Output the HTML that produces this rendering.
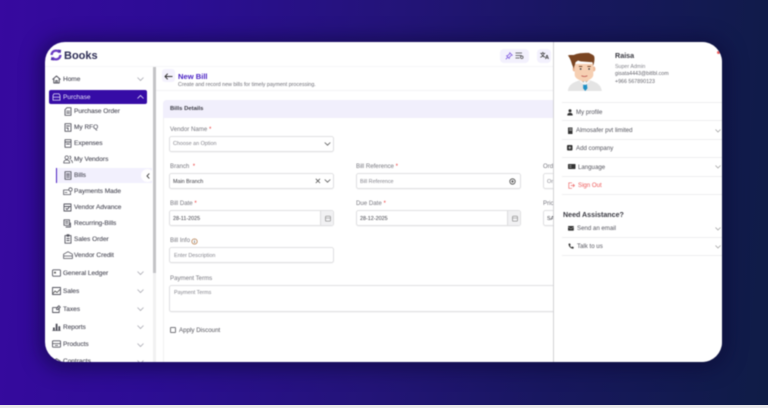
<!DOCTYPE html>
<html lang="en">
<head>
<meta charset="utf-8">
<title>New Bill</title>
<style>
*{box-sizing:border-box;margin:0;padding:0}
html,body{width:768px;height:408px;overflow:hidden;background:#e8e8ea}
body{font-family:"Liberation Sans",sans-serif;position:relative}
#bg{position:absolute;left:0;top:0;width:768px;height:405px;background:linear-gradient(95deg,#37099f 0%,#2c0d94 22%,#231478 50%,#18175f 72%,#0f1c46 100%)}
#card{position:absolute;left:45px;top:42px;width:677px;height:320px;background:#fff;border-radius:20px;overflow:hidden;box-shadow:0 2px 18px 6px rgba(10,8,50,.5);filter:blur(.42px)}
.a{position:absolute;white-space:nowrap}
svg{position:absolute;overflow:visible}
.s{fill:none;stroke:#55555f;stroke-width:1;stroke-linecap:round;stroke-linejoin:round}
.nav{font-size:6.5px;color:#4b4b57;-webkit-text-stroke:.1px #4b4b57}
.chev{fill:none;stroke:#a9a9b2;stroke-width:.8}
.lab{font-size:6.1px;color:#77777f}
.r{color:#ec3b3b}
.inp{position:absolute;border:1px solid #e0e0e2;border-radius:2.5px;background:#fff;box-shadow:0 .5px 1px rgba(0,0,0,.06);height:16px}
.ph{font-size:5.4px;color:#85858d}
.v{font-size:5.4px;color:#3a3a42}
.addon{position:absolute;right:0;top:0;height:100%;width:13px;background:#f1f1f3;border-left:1px solid #dcdcdf;border-radius:0 2.5px 2.5px 0}
.ln{position:absolute;left:517px;width:160px;height:1px;background:#eeeeef}
.pi{font-size:6.1px;color:#55555e}
</style>
</head>
<body>
<div id="bg"></div>
<div id="card">
  <!-- logo -->
  <svg style="left:5px;top:7px" width="12" height="12" viewBox="0 0 12 12"><circle cx="6" cy="6" r="4.400" fill="none" stroke="#6a3bc4" stroke-width="2.300" stroke-dasharray="11 2.800"/><path d="M7.800.5 11.200 1 10.400 4.500zM4.200 11.500.8 11 1.600 7.500z" fill="#4d2aa8"/></svg>
  <div class="a" style="left:19px;top:8px;font-size:11px;font-weight:700;color:#2d2d55">Books</div>
  <div class="a" style="left:0;top:24px;width:677px;height:1px;background:#f6f6f8"></div>

  <!-- sidebar -->
  <svg style="left:7px;top:33px" width="9" height="9" viewBox="0 0 9 9"><path class="s" d="M.8 4.300 4.500 1l3.700 3.300M1.800 3.600V8h5.400V3.600M3.700 8V5.600h1.600V8"/></svg>
  <div class="a nav" style="left:18px;top:34px">Home</div>
  <svg style="left:92px;top:35px" width="7" height="4"><path class="chev" d="M.5.500 3.500 3.500 6.500.500"/></svg>

  <div class="a" style="left:4px;top:48px;width:98px;height:14px;background:#360ca6;border-radius:2px"></div>
  <svg style="left:7px;top:51px" width="9" height="8" viewBox="0 0 9 8"><path d="M1 2.500 2 .8h5l1 1.700v4.700H1zM1 4.200h7" fill="none" stroke="#cfc6f2" stroke-width=".9"/></svg>
  <div class="a nav" style="left:18px;top:52px;color:#e6e1fa;-webkit-text-stroke:0">Purchase</div>
  <svg style="left:92px;top:53px" width="7" height="4"><path d="M.5 3.500 3.500.500 6.500 3.500" fill="none" stroke="#e6e1fa" stroke-width=".8"/></svg>

  <svg style="left:19px;top:65px" width="8" height="9" viewBox="0 0 8 9"><path class="s" style="stroke-width:.9" d="M3 .7h4v7.600H1V2.700zM2.600 4.200h3M2.600 6h3"/></svg>
  <div class="a nav" style="left:29px;top:66px">Purchase Order</div>
  <svg style="left:19px;top:81px" width="8" height="9" viewBox="0 0 8 9"><path class="s" style="stroke-width:.9" d="M1 .7h6v7.600H1zM2.500 3h3M2.500 5h1.600v2"/></svg>
  <div class="a nav" style="left:29px;top:82px">My RFQ</div>
  <svg style="left:19px;top:97px" width="8" height="9" viewBox="0 0 8 9"><path class="s" style="stroke-width:.9" fill="#ddd" d="M1 .7h6v7.600H1zM1 3h6M2.500 5h3"/></svg>
  <div class="a nav" style="left:29px;top:98px">Expenses</div>
  <svg style="left:18px;top:113px" width="10" height="9" viewBox="0 0 10 9"><circle class="s" style="stroke-width:.8" cx="3.700" cy="2.600" r="1.700"/><path class="s" style="stroke-width:.8" d="M.7 8c0-2 1.300-3 3-3s3 1 3 3zM6.800 1.200c1.200.2 1.500 2.400 0 2.900M8 5.200c1 .4 1.400 1.400 1.400 2.600"/></svg>
  <div class="a nav" style="left:29px;top:114px">My Vendors</div>

  <div class="a" style="left:11px;top:126px;width:96px;height:15px;background:#f2f0fd"></div>
  <div class="a" style="left:11px;top:126px;width:1px;height:15px;background:#4a1fc0"></div>
  <div class="a" style="left:96px;top:127px;width:13px;height:13px;border-radius:50%;background:#fff"></div>
  <svg style="left:101px;top:131px" width="4" height="6"><path d="M3.300.5 1 3l2.300 2.500" fill="none" stroke="#333" stroke-width=".9"/></svg>
  <svg style="left:19px;top:129px" width="8" height="9" viewBox="0 0 8 9"><path class="s" style="stroke-width:.9" d="M1 .7h6v7.600H1zM2.500 3h3M2.500 4.600h3M2.500 6.200h3"/></svg>
  <div class="a nav" style="left:29px;top:130px">Bills</div>

  <svg style="left:18px;top:145px" width="10" height="9" viewBox="0 0 10 9"><path class="s" style="stroke-width:.8" d="M.6 3h5M.6 3v4.600h7V5M2 5.500h2"/><circle class="s" style="stroke-width:.8" cx="7.500" cy="2.500" r="1.700"/></svg>
  <div class="a nav" style="left:29px;top:146px">Payments Made</div>
  <svg style="left:18px;top:161px" width="9" height="9" viewBox="0 0 9 9"><path class="s" style="stroke-width:.9" d="M1 1h7v7H1zM1 3.500h7M3 5.500l1 1 2-2"/></svg>
  <div class="a nav" style="left:29px;top:162px">Vendor Advance</div>
  <svg style="left:18px;top:177px" width="9" height="9" viewBox="0 0 9 9"><path class="s" style="stroke-width:.9" d="M1 .8h5.500v5.500H1zM2.500 2.600h2.500M2.500 4.200h2.500M7.500 4v4H3"/></svg>
  <div class="a nav" style="left:29px;top:178px">Recurring-Bills</div>
  <svg style="left:19px;top:192px" width="8" height="10" viewBox="0 0 8 10"><path class="s" style="stroke-width:.9" d="M1 1.600h6v7.600H1zM3 .7h2v1.600H3zM2.800 4.500h2.400M2.800 6.500h2.400"/></svg>
  <div class="a nav" style="left:29px;top:194px">Sales Order</div>
  <svg style="left:18px;top:209px" width="10" height="8" viewBox="0 0 10 8"><path class="s" style="stroke-width:.8" d="M.6 3.200 5 .7l4.400 2.500v4.300H.6zM.6 5h8.800"/></svg>
  <div class="a nav" style="left:29px;top:210px">Vendor Credit</div>

  <svg style="left:7px;top:227px" width="9" height="8" viewBox="0 0 9 8"><rect class="s" x=".5" y=".8" width="8" height="6.400" rx="1" fill="#ccc" style="stroke-width:.9"/><circle cx="3" cy="3.600" r="1" fill="#555"/></svg>
  <div class="a nav" style="left:18px;top:227.500px">General Ledger</div>
  <svg style="left:92px;top:229px" width="7" height="4"><path class="chev" d="M.5.500 3.500 3.500 6.500.500"/></svg>

  <svg style="left:7px;top:245px" width="9" height="8" viewBox="0 0 9 8"><rect class="s" x=".5" y=".5" width="8" height="7" fill="#bbb" style="stroke-width:.9"/><path d="M1 6.500 3 4l2 1.500L8 2.500" fill="none" stroke="#444" stroke-width=".8"/></svg>
  <div class="a nav" style="left:18px;top:245.500px">Sales</div>
  <svg style="left:92px;top:247px" width="7" height="4"><path class="chev" d="M.5.500 3.500 3.500 6.500.500"/></svg>

  <svg style="left:7px;top:263px" width="9" height="8" viewBox="0 0 9 8"><path class="s" style="stroke-width:.9" d="M.6 2.600h5.600M.6 2.600v4.900h6.600V4M6.800.7l1.500 1.500L6 4.500H4.600V3z"/></svg>
  <div class="a nav" style="left:18px;top:263.500px">Taxes</div>
  <svg style="left:92px;top:265px" width="7" height="4"><path class="chev" d="M.5.500 3.500 3.500 6.500.500"/></svg>

  <svg style="left:7px;top:281px" width="9" height="8" viewBox="0 0 9 8"><path d="M1 7.500V4.500h1.800v3zM3.700 7.500V.8h1.800v6.700zM6.400 7.500V3.300h1.800v4.200z" fill="#4a4a55"/><path d="M.3 7.600h8.400" stroke="#4a4a55" stroke-width=".6"/></svg>
  <div class="a nav" style="left:18px;top:281.500px">Reports</div>
  <svg style="left:92px;top:283px" width="7" height="4"><path class="chev" d="M.5.500 3.500 3.500 6.500.500"/></svg>

  <svg style="left:7px;top:298px" width="9" height="8" viewBox="0 0 9 8"><rect class="s" x=".5" y=".8" width="8" height="6.400" rx=".7" style="stroke-width:.9"/><path d="M.5 3.600h8M3 5.400h3" stroke="#4a4a55" stroke-width=".8"/></svg>
  <div class="a nav" style="left:18px;top:299px">Products</div>
  <svg style="left:92px;top:301px" width="7" height="4"><path class="chev" d="M.5.500 3.500 3.500 6.500.500"/></svg>

  <svg style="left:7px;top:316px" width="9" height="8" viewBox="0 0 9 8"><path class="s" style="stroke-width:.9" d="M.8 3 4.500.8 8.200 3v3.500H.8z"/></svg>
  <div class="a nav" style="left:18px;top:316px">Contracts</div>
  <svg style="left:92px;top:318px" width="7" height="4"><path class="chev" d="M.5.500 3.500 3.500 6.500.500"/></svg>

  <!-- sidebar scrollbar -->
  <div class="a" style="left:108px;top:25px;width:3px;height:295px;background:#f1f1f2"></div>
  <div class="a" style="left:108px;top:25px;width:3px;height:206px;background:#c3c3c6"></div>

  <!-- header -->
  <div class="a" style="left:117px;top:27px;width:13px;height:13px;border-radius:3px;background:#f4f2fd"></div>
  <svg style="left:119px;top:31px" width="9" height="7" viewBox="0 0 9 7"><path d="M8.500 3.500H1M3.700.7 1 3.500l2.700 2.800" fill="none" stroke="#333" stroke-width="1"/></svg>
  <div class="a" style="left:133px;top:30px;font-size:7.600px;font-weight:700;color:#4a22c4">New Bill</div>
  <div class="a" style="left:133px;top:40px;font-size:5.300px;color:#6e6e76">Create and record new bills for timely payment processing.</div>
  <div class="a" style="left:111px;top:48px;width:398px;height:1px;background:#f3f3f5"></div>

  <div class="a" style="left:455px;top:7px;width:29px;height:14px;border-radius:4px;background:#f3f1fd"></div>
  <svg style="left:460px;top:10px" width="8" height="8" viewBox="0 0 8 8"><path d="M4.800.8 7.200 3.200 5.800 3.600 4.400 5.400 4.200 6.400 1.600 3.800 2.600 3.600 4.400 2.200zM2.800 5.200.8 7.200" fill="none" stroke="#7f5be0" stroke-width=".8"/></svg>
  <svg style="left:470px;top:10px" width="9" height="8" viewBox="0 0 9 8"><path d="M.5 1h6.500M.5 3.500h6M.5 6h4" stroke="#444" stroke-width=".8"/><circle cx="6.800" cy="5.300" r="1.300" fill="none" stroke="#444" stroke-width=".7"/></svg>
  <div class="a" style="left:492px;top:7px;width:14px;height:14px;border-radius:4px;background:#f3f1fd"></div>
  <div class="a" style="left:495px;top:9px;font-size:5.500px;font-weight:700;color:#333;font-family:'Liberation Sans','Noto Sans CJK SC',sans-serif">文</div>
  <div class="a" style="left:500px;top:12.500px;font-size:5.500px;font-weight:700;color:#333">A</div>

  <!-- form -->
  <div class="a" style="left:118px;top:58px;width:392px;height:262px;border-left:1px solid #f1f1f2;border-top:1px solid #eeeeef;border-radius:4px 0 0 0"></div>
  <div class="a" style="left:118px;top:58px;width:392px;height:18px;background:#f1effc;border-radius:4px 0 0 0"></div>
  <div class="a" style="left:125px;top:64px;font-size:5.900px;font-weight:700;color:#3c3c46">Bills Details</div>

  <div class="a lab" style="left:125px;top:83.500px">Vendor Name <span class="r">*</span></div>
  <div class="inp" style="left:124px;top:94px;width:165px;height:15.500px"></div>
  <div class="a ph" style="left:128px;top:99px">Choose an Option</div>
  <svg style="left:279px;top:100px" width="7" height="4"><path d="M.7.500 3.500 3.200 6.300.500" fill="none" stroke="#555" stroke-width=".8"/></svg>

  <div class="a lab" style="left:125px;top:120.500px">Branch &nbsp;<span class="r">*</span></div>
  <div class="inp" style="left:124px;top:131px;width:165px"></div>
  <div class="a v" style="left:128px;top:136.500px">Main Branch</div>
  <svg style="left:270px;top:136px" width="6" height="6"><path d="M.8.800 5 5M5 .8.800 5" stroke="#555" stroke-width=".8"/></svg>
  <svg style="left:279px;top:137px" width="7" height="4"><path d="M.7.500 3.500 3.200 6.300.500" fill="none" stroke="#555" stroke-width=".8"/></svg>

  <div class="a lab" style="left:311px;top:120.500px">Bill Reference <span class="r">*</span></div>
  <div class="inp" style="left:311px;top:131px;width:165px"></div>
  <div class="a ph" style="left:315px;top:136.500px">Bill Reference</div>
  <svg style="left:464px;top:136px" width="7" height="7"><circle cx="3.500" cy="3.500" r="2.700" fill="none" stroke="#444" stroke-width=".8"/><circle cx="3.500" cy="3.500" r="1.200" fill="#666"/></svg>

  <div class="a lab" style="left:498px;top:120.500px">Order</div>
  <div class="inp" style="left:498px;top:131px;width:40px"></div>
  <div class="a ph" style="left:502px;top:136.500px">Order</div>

  <div class="a lab" style="left:125px;top:158px">Bill Date <span class="r">*</span></div>
  <div class="inp" style="left:124px;top:168px;width:165px"><div class="addon"></div></div>
  <div class="a v" style="left:128px;top:173.500px">28-11-2025</div>
  <svg style="left:280px;top:173px" width="6" height="7"><rect x=".5" y="1.200" width="5" height="5" rx=".8" fill="none" stroke="#888" stroke-width=".7"/><path d="M.5 3h5" stroke="#888" stroke-width=".6"/></svg>

  <div class="a lab" style="left:311px;top:158px">Due Date <span class="r">*</span></div>
  <div class="inp" style="left:311px;top:168px;width:165px"><div class="addon"></div></div>
  <div class="a v" style="left:315px;top:173.500px">28-12-2025</div>
  <svg style="left:467px;top:173px" width="6" height="7"><rect x=".5" y="1.200" width="5" height="5" rx=".8" fill="none" stroke="#888" stroke-width=".7"/><path d="M.5 3h5" stroke="#888" stroke-width=".6"/></svg>

  <div class="a lab" style="left:498px;top:158px">Price List</div>
  <div class="inp" style="left:498px;top:168px;width:40px"></div>
  <div class="a v" style="left:502px;top:173.500px">SAR</div>

  <div class="a lab" style="left:125px;top:195px">Bill Info</div>
  <svg style="left:146px;top:196px" width="7" height="7"><circle cx="3.500" cy="3.500" r="2.700" fill="none" stroke="#b0703a" stroke-width=".7"/><path d="M3.500 3v2M3.500 1.800v.6" stroke="#555" stroke-width=".7"/></svg>
  <div class="inp" style="left:124px;top:205px;width:165px"></div>
  <div class="a ph" style="left:129px;top:211px">Enter Description</div>

  <div class="a lab" style="left:125px;top:232.500px">Payment Terms</div>
  <div class="inp" style="left:124px;top:243px;width:400px;height:27px"></div>
  <div class="a ph" style="left:129px;top:247.500px">Payment Terms</div>

  <div class="a" style="left:125px;top:285px;width:6px;height:6px;border:1px solid #77777d;border-radius:1px"></div>
  <div class="a" style="left:134px;top:284.500px;font-size:6.200px;color:#55555d">Apply Discount</div>

  <!-- profile panel -->
  <div class="a" style="left:508px;top:0;width:169px;height:320px;background:#fff;border-left:1.500px solid #d2d2d5"></div>
  <!-- avatar -->
  <svg style="left:517px;top:10px" width="44" height="39" viewBox="0 0 52 46">
    <path d="M7 46c1-9 9-11 15-13h10c6 2 14 4 15 13z" fill="#e4e4e4"/>
    <path d="M22 28h9v6l-4.500 4-4.500-4z" fill="#f0c4a4"/>
    <path d="M25 35h4l1 8-2.500 3-2.500-3z" fill="#1e8fc4"/>
    <path d="M22 33l3 3 2-2 2 2 3-3 1 2-5 4-1-.5-1 .5-5-4z" fill="#f4f4f4"/>
    <ellipse cx="14.500" cy="20" rx="2" ry="3" fill="#eeb998"/>
    <ellipse cx="37.500" cy="20" rx="2" ry="3" fill="#eeb998"/>
    <path d="M15 14h22v13c0 4-6 7-11 7s-11-3-11-7z" fill="#f6cfb2"/>
    <path d="M7 4c4-1 6 0 8-1 5-2 12-2 17-2 1 1 5 2 6 4 1 3 0 8-1 11l-1-4-14-1-3-1-3 2-1 4c-1 2-1 2-1 4l-2-5c-1-3-2-7-5-11z" fill="#7a4522"/>
    <path d="M20 17h4M30 17h4" stroke="#6a3a1c" stroke-width="1"/>
    <circle cx="22" cy="20" r="1" fill="#333"/><circle cx="32" cy="20" r="1" fill="#333"/>
    <path d="M23 28c2 1 5 1 7 0" stroke="#b9554f" stroke-width=".9" fill="none"/>
  </svg>
  <div class="a" style="left:570px;top:9px;font-size:7.200px;font-weight:700;color:#3a3a42">Raisa</div>
  <div class="a" style="left:570px;top:21.500px;font-size:5.300px;color:#85858c">Super Admin</div>
  <div class="a" style="left:570px;top:29px;font-size:5.300px;color:#66666e">gisata4443@bitlbl.com</div>
  <div class="a" style="left:570px;top:37px;font-size:5.300px;color:#66666e">+966 567890123</div>

  <div class="ln" style="top:60px"></div>
  <svg style="left:522px;top:67px" width="6" height="7"><circle cx="3" cy="1.800" r="1.500" fill="#333"/><path d="M.3 6.500C.3 4.500 1.500 3.800 3 3.800s2.700.7 2.700 2.700z" fill="#333"/></svg>
  <div class="a pi" style="left:531px;top:66.500px">My profile</div>
  <div class="ln" style="top:78px"></div>
  <svg style="left:522px;top:85px" width="6" height="7"><path d="M1 .5h4.500v6.500H1z" fill="#333"/><path d="M2 1.800h3M2 3.300h3" stroke="#fff" stroke-width=".5"/></svg>
  <div class="a pi" style="left:531px;top:85px">Almosafer pvt limited</div>
  <svg style="left:670px;top:87px" width="6" height="4"><path d="M.5.500 3 3 5.500.500" fill="none" stroke="#999" stroke-width=".7"/></svg>
  <div class="ln" style="top:97px"></div>
  <svg style="left:522px;top:103px" width="6" height="6"><rect width="5.500" height="5.500" rx="1" fill="#333"/><path d="M2.750 1.300v2.900M1.300 2.750h2.900" stroke="#fff" stroke-width=".6"/></svg>
  <div class="a pi" style="left:531px;top:103px">Add company</div>
  <div class="ln" style="top:115px"></div>
  <svg style="left:523px;top:122px" width="8" height="6"><rect width="7.500" height="5" rx=".6" fill="#333"/><path d="M1.200 1.500h2.300M1.200 3.200h2.300" stroke="#ddd" stroke-width=".5"/></svg>
  <div class="a pi" style="left:533px;top:121.500px">Language</div>
  <svg style="left:670px;top:123px" width="6" height="4"><path d="M.5.500 3 3 5.500.500" fill="none" stroke="#999" stroke-width=".7"/></svg>
  <div class="ln" style="top:134px"></div>
  <svg style="left:523px;top:140px" width="7" height="7"><path d="M4 .8H.8v5.500H4M2.800 3.500h3.700M5 2l1.500 1.500L5 5" fill="none" stroke="#ee6a6a" stroke-width=".7"/></svg>
  <div class="a pi" style="left:533px;top:140px;color:#ee5a5a">Sign Out</div>
  <div class="ln" style="top:152px"></div>

  <div class="a" style="left:518px;top:168.500px;font-size:7.100px;font-weight:700;color:#3a3a42">Need Assistance?</div>
  <svg style="left:523px;top:184px" width="6" height="5"><rect width="5.800" height="4.600" rx=".5" fill="#333"/><path d="M0 1l2.900 1.800L5.800 1" stroke="#fff" stroke-width=".4" fill="none"/></svg>
  <div class="a pi" style="left:532px;top:183px">Send an email</div>
  <svg style="left:670px;top:185px" width="6" height="4"><path d="M.5.500 3 3 5.500.500" fill="none" stroke="#999" stroke-width=".7"/></svg>
  <div class="ln" style="top:195px"></div>
  <svg style="left:523px;top:201px" width="6" height="6"><path d="M.6.800 1.900.400l.8 1.500-.7.700c.3.800.8 1.300 1.600 1.600l.7-.7 1.500.8-.4 1.300C3 6.200.2 3.200.6.800z" fill="#333"/></svg>
  <div class="a pi" style="left:532px;top:201px">Talk to us</div>
  <svg style="left:670px;top:203px" width="6" height="4"><path d="M.5.500 3 3 5.500.500" fill="none" stroke="#999" stroke-width=".7"/></svg>
  <div class="ln" style="top:213px"></div>
  <div class="a" style="left:672px;top:9px;width:3px;height:3px;background:#ee5a5a;border-radius:50%"></div>
</div>
</body>
</html>
